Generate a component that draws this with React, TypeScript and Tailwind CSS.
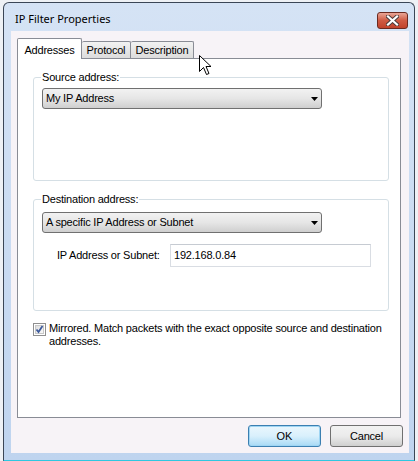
import React from "react";

const ui = { fontFamily: '"Liberation Sans", Arial, sans-serif' };
const titleFont = { fontFamily: '"Noto Sans", "Open Sans", sans-serif' };

function Combo({ text }: { text: string }) {
  return (
    <div className="flex h-[21px] w-[280px] items-center justify-between rounded-[3px] border border-[#707070] bg-gradient-to-b from-[#f2f2f2] via-[#e6e6e6] to-[#cfcfcf] pl-[3px] pr-[3px] text-[11px] tracking-[-0.2px] text-black">
      <span>{text}</span>
      <svg width="7" height="4" viewBox="0 0 7 4">
        <path d="M0 0H7L3.5 4Z" fill="#000" />
      </svg>
    </div>
  );
}

function GroupBox({ label, height, children }: { label: string; height: number; children?: React.ReactNode }) {
  return (
    <div className="relative w-[356px] rounded-[3px] border border-[#d5dfe5]" style={{ height }}>
      <span className="absolute left-[7px] top-[-7px] bg-white px-[1px] text-[11px] leading-[13px] tracking-[-0.2px] text-black">
        {label}
      </span>
      {children}
    </div>
  );
}

function Cursor() {
  return (
    <svg className="absolute left-[199px] top-[55px]" width="13" height="21" viewBox="0 0 13 21">
      <path d="M0.5 0.5V16.5L4.5 12.5L7.5 19.5L10 18.5L7 11.5H12Z" fill="#fff" stroke="#000" strokeWidth="1" strokeLinejoin="miter" />
    </svg>
  );
}

export default function App() {
  return (
    <div className="relative h-[461px] w-[418px] overflow-hidden bg-[#eef1f5]" style={ui}>
      <div className="ml-[3px] mt-[2px] flex h-[459px] w-[412px] flex-col rounded-t-[6px] border border-b-[#2fc7e0] border-[#3b4656] bg-gradient-to-b from-[#d5e3f5] to-[#bfd4ef]">
        <div className="flex h-[28px] items-start justify-between pl-[11px] pr-[6px] pt-[8px]">
          <span className="text-[11px] leading-[16px] text-black" style={titleFont}>
            IP Filter Properties
          </span>
          <div className="mt-[1px] flex h-[17px] w-[31px] items-center justify-center rounded-[3px] border border-[#6b2a20] bg-gradient-to-b from-[#e9a596] via-[#cf5a43] to-[#c1422b]">
            <svg width="13" height="11" viewBox="0 0 13 11">
              <path d="M2 1.5L11 9.5M11 1.5L2 9.5" stroke="#4a3a3a" strokeWidth="4" strokeLinecap="square" />
              <path d="M2 1.5L11 9.5M11 1.5L2 9.5" stroke="#fff" strokeWidth="2.2" strokeLinecap="square" />
            </svg>
          </div>
        </div>
        <div className="ml-[7px] flex h-[422px] w-[398px] flex-col bg-[#f7f3f7] pl-[6px] pt-[7px]">
          <div className="flex h-[20px] items-end">
            <div className="relative z-10 mb-[-1px] flex h-[21px] w-[65px] items-start justify-center rounded-t-[2px] border border-b-0 border-[#898c95] bg-white pt-[3px] text-[11px] tracking-[-0.2px]">
              Addresses
            </div>
            <div className="flex h-[17px] w-[49px] items-center justify-center rounded-t-[2px] border border-b-0 border-l-0 border-[#898c95] bg-gradient-to-b from-[#f2f2f2] to-[#dcdcdc] text-[11px] tracking-[-0.2px]">
              Protocol
            </div>
            <div className="flex h-[17px] w-[63px] items-center justify-center rounded-t-[2px] border border-b-0 border-l-0 border-[#898c95] bg-gradient-to-b from-[#f2f2f2] to-[#dcdcdc] text-[11px] tracking-[-0.2px]">
              Description
            </div>
          </div>
          <div className="flex h-[360px] w-[384px] flex-col border border-[#898c95] bg-white pl-[15px] pt-[18px]">
            <GroupBox label="Source address:" height={104}>
              <div className="pl-[8px] pt-[10px]">
                <Combo text="My IP Address" />
              </div>
            </GroupBox>
            <div className="mt-[18px]">
              <GroupBox label="Destination address:" height={112}>
                <div className="pl-[8px] pt-[12px]">
                  <Combo text="A specific IP Address or Subnet" />
                  <div className="mt-[11px] flex items-center">
                    <span className="w-[128px] whitespace-nowrap pl-[15px] text-[11px] tracking-[-0.2px]">IP Address or Subnet:</span>
                    <div className="flex h-[23px] w-[201px] items-center border border-[#d9dde3] border-t-[#c6cbd2] bg-white pl-[3px] text-[11px] tracking-[-0.2px]">
                      192.168.0.84
                    </div>
                  </div>
                </div>
              </GroupBox>
            </div>
            <div className="mt-[11px] flex items-start">
              <svg className="mt-[1px] shrink-0" width="13" height="13" viewBox="0 0 13 13">
                <defs>
                  <linearGradient id="cb" x1="0" y1="0" x2="1" y2="1">
                    <stop offset="0" stopColor="#dcdcdc" />
                    <stop offset="1" stopColor="#fbfbfb" />
                  </linearGradient>
                </defs>
                <rect x="0.5" y="0.5" width="12" height="12" fill="#fff" stroke="#8f8f8f" />
                <rect x="2.5" y="2.5" width="8" height="8" fill="url(#cb)" stroke="#c8c8c8" />
                <path d="M3.5 6.5L5.5 9L9.5 3" fill="none" stroke="#3d5a9c" strokeWidth="1.8" />
              </svg>
              <span className="ml-[3px] text-[11px] leading-[13px] tracking-[-0.2px]">
                Mirrored. Match packets with the exact opposite source and destination
                <br />
                addresses.
              </span>
            </div>
          </div>
          <div className="mt-[7px] flex gap-[9px] pl-[231px]">
            <div className="flex h-[22px] w-[73px] items-center justify-center rounded-[3px] border border-[#3c7fb1] bg-gradient-to-b from-[#eaf6fd] via-[#d9f0fc] to-[#a7d9f5] text-[11px] shadow-[inset_0_0_0_1px_#9fd5f3]">
              OK
            </div>
            <div className="flex h-[22px] w-[73px] items-center justify-center rounded-[3px] border border-[#707070] bg-gradient-to-b from-[#f2f2f2] via-[#ebebeb] to-[#cfcfcf] text-[11px] tracking-[-0.2px]">
              Cancel
            </div>
          </div>
        </div>
      </div>
      <Cursor />
    </div>
  );
}
